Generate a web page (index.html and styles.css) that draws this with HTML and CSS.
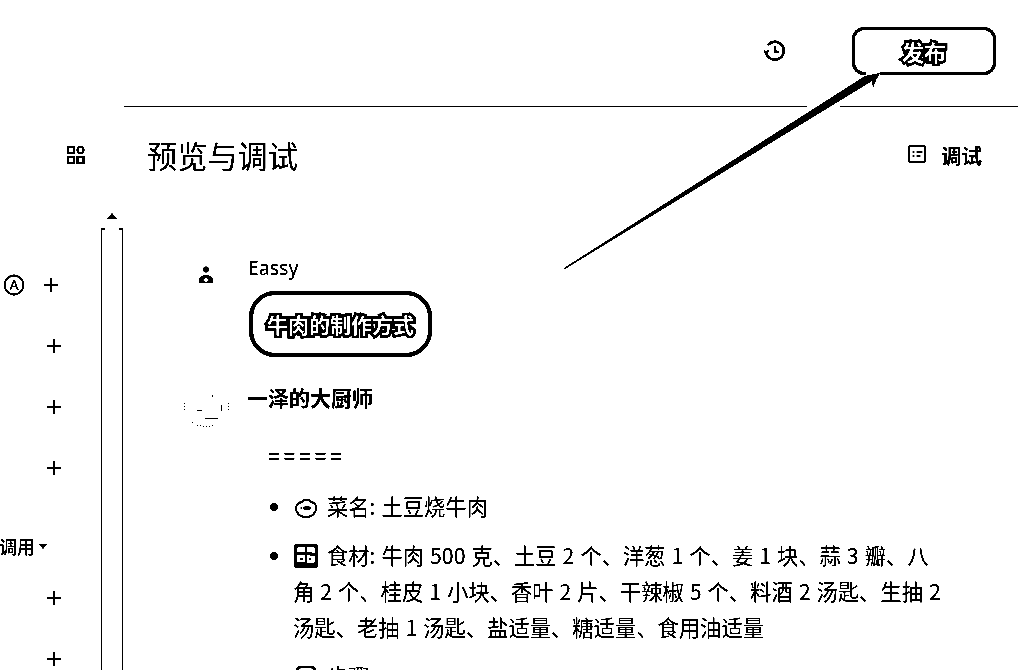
FILE: index.html
```html
<!DOCTYPE html>
<html lang="zh">
	<head>
		<meta charset="utf-8">
		<title>预览与调试</title>
		<link rel="stylesheet" href="styles.css">
	</head>
	<body>
		<div class="page">
			<header class="topbar">
				<div class="topbar-actions">
					<svg class="history" width="24" height="24" viewBox="0 0 24 24" fill="none" stroke="#000" stroke-width="2.400">
						<path d="M5 6A9 9 0 1 1 3 13"/>
						<path d="M1 11.500 3 14 5.500 11.500" stroke-width="1.800"/>
						<path d="M12 7v6h4" stroke-width="2.600"/>
					</svg>
					<button class="publish">发布</button>
				</div>
				<div class="topbar-rule">
					<span class="rule-long"></span>
					<span class="rule-short"></span>
				</div>
			</header>

			<div class="workspace">
				<aside class="sidebar">
					<div class="rail">
						<svg class="grid-icon" width="18" height="18" viewBox="0 0 18 18" fill="none" stroke="#000" stroke-width="2">
							<rect x="1" y="1" width="6" height="6"/>
							<circle cx="13.500" cy="4" r="3"/>
							<rect x="1" y="11" width="6" height="6"/>
							<rect x="10.500" y="11" width="6" height="6"/>
						</svg>
						<div class="rail-row">
							<svg class="model-icon" width="22" height="22" viewBox="0 0 22 22">
								<circle cx="11" cy="11" r="9.500" fill="none" stroke="#000" stroke-width="1.800"/>
								<text x="11" y="16" text-anchor="middle" class="model-letter">A</text>
							</svg>
							<span class="plus"></span>
						</div>
						<div class="rail-row"><span class="plus"></span></div>
						<div class="rail-row"><span class="plus"></span></div>
						<div class="rail-row"><span class="plus"></span></div>
						<div class="rail-label">调用<span class="caret"></span></div>
						<div class="rail-row"><span class="plus"></span></div>
						<div class="rail-row"><span class="plus"></span></div>
					</div>
					<div class="scroller">
						<span class="scroll-up"></span>
						<div class="scroll-track"></div>
					</div>
				</aside>

				<main class="preview">
					<div class="preview-head">
						<h1 class="preview-title">预览与调试</h1>
						<div class="debug">
							<svg width="20" height="20" viewBox="0 0 20 20" fill="none" stroke="#000" stroke-width="2">
								<rect x="2" y="1" width="16" height="16" rx="1.500"/>
								<path d="M5.500 7h2M9.500 7h6M5.500 11h2M9.500 11h4" stroke-width="1.600"/>
							</svg>
							<span>调试</span>
						</div>
					</div>

					<section class="message user-message">
						<svg class="avatar" width="46" height="24" viewBox="0 0 46 24">
							<circle cx="23" cy="6.500" r="3"/>
							<path fill-rule="evenodd" d="M16 20v-2.500c0-3 3-5 5-5h4c2 0 5 2 5 5v2.500zM19.500 17l3.500 2 3.500-2-3.500-2z"/>
						</svg>
						<div class="message-body">
							<div class="sender">Eassy</div>
							<div class="bubble"><span class="outlined">牛肉的制作方式</span></div>
						</div>
					</section>

					<section class="message bot-message">
						<svg class="avatar chef" width="46" height="36" viewBox="0 0 46 36" fill="none" stroke="#000">
							<path d="M1.500 10v8M45.500 10v7M9 29l5 3 6 1.500h7l5-1.500" stroke-dasharray="1 2"/>
							<path d="M29.500 2v2M14 17.500h5M38.500 12v6M22 25.500h13"/>
						</svg>
						<div class="message-body">
							<div class="bot-name">一泽的大厨师</div>
							<p class="divider-text">=====</p>
							<ul class="reply-list">
								<li>
									<svg class="inline-icon" width="24" height="22" viewBox="0 0 24 22" fill="none" stroke="#000" stroke-width="1.800">
										<path d="M3 15c-3-5 1-10 5-10 2-3 7-3 9 0 4 0 7 5 4 10-2 4-5 5-9 5s-7-1-9-5z"/>
										<path d="M6.500 11h1.500" stroke-width="1.400"/>
										<ellipse cx="13" cy="11" rx="4.500" ry="1.800" fill="#000" stroke="none"/>
									</svg>
									菜名: 土豆烧牛肉
								</li>
								<li>
									<svg class="inline-icon" width="24" height="24" viewBox="0 0 24 24">
										<rect width="24" height="24" rx="3"/>
										<path fill="#fff" d="M4 3h7v5H3V4zM13 3h7l1 1v5l-8-1zM3 11h8v7H3zM13 11l8 1v6l-2 1h-6z"/>
										<path d="M6 14h3v2H6zM15 14h2v2h-2z"/>
									</svg>
									食材: 牛肉 500 克、土豆 2 个、洋葱 1 个、姜 1 块、蒜 3 瓣、八角 2 个、桂皮 1 小块、香叶 2 片、干辣椒 5 个、料酒 2 汤匙、生抽 2 汤匙、老抽 1 汤匙、盐适量、糖适量、食用油适量
								</li>
								<li>
									<svg class="inline-icon" width="24" height="24" viewBox="0 0 24 24" fill="none" stroke="#000" stroke-width="2.500">
										<rect x="3" y="2" width="18" height="20" rx="4"/>
									</svg>
									步骤:
								</li>
							</ul>
						</div>
					</section>
				</main>
			</div>

			<svg class="arrow" width="1018" height="300" viewBox="0 0 1018 300">
				<path fill="#fff" d="M866 68h14v9h-14z"/>
				<path d="M564 268 865 76 880 73 876 80 873 88 872 81 565 269z"/>
			</svg>
		</div>
	</body>
</html>
```

FILE: styles.css
```css
html,body{
	margin:0;
	background:#fff;
}
.page{
	position:relative;
	width:1018px;
	height:670px;
	overflow:hidden;
	background:#fff;
	color:#000;
	font-family:"Noto Sans CJK SC","Noto Sans",sans-serif;
	filter:grayscale(1) brightness(.82) contrast(12);
}

/* top bar */
.topbar{
	margin-left:124px;
	height:107px;
	display:flex;
	flex-direction:column;
}
.topbar-actions{
	flex:1;
	display:flex;
	align-items:flex-start;
	justify-content:flex-end;
	padding:27px 22px 0 0;
}
.history{
	margin:12px 65px 0 0;
}
.publish{
	width:144px;
	height:48px;
	padding:0;
	background:#fff;
	border:3px solid #000;
	border-radius:12px;
	font-family:inherit;
	font-size:22px;
	font-weight:700;
	line-height:1;
	color:#fff;
	-webkit-text-stroke:5px #000;
	paint-order:stroke fill;
}
.topbar-rule{
	display:flex;
	gap:33px;
}
.rule-long,.rule-short{
	height:1px;
	background:#000;
}
.rule-long{
	flex:1;
}
.rule-short{
	width:178px;
}

.workspace{
	display:flex;
	height:563px;
}

/* left rail */
.sidebar{
	width:124px;
	flex:none;
	display:flex;
}
.rail{
	width:101px;
	flex:none;
}
.grid-icon{
	display:block;
	margin:39px 0 90px 67px;
}
.rail-row{
	height:61px;
	display:flex;
	align-items:center;
	padding-left:47px;
	box-sizing:border-box;
}
.model-icon{
	margin-left:-44px;
	margin-right:19px;
}
.model-letter{
	font-family:"Noto Sans",sans-serif;
	font-size:14px;
	font-weight:500;
}
.plus{
	width:14px;
	height:14px;
	background:
		linear-gradient(#000,#000) center/14px 2px no-repeat,
		linear-gradient(#000,#000) center/2px 14px no-repeat;
}
.rail-label{
	height:69px;
	box-sizing:border-box;
	padding-bottom:9px;
	margin-left:-1px;
	font-size:18px;
	line-height:24px;
	font-weight:500;
	display:flex;
	align-items:flex-end;
	gap:4px;
}
.caret{
	width:0;
	height:0;
	margin-bottom:9px;
	border:4.500px solid transparent;
	border-top:5px solid #000;
	border-bottom:0;
}
.scroller{
	width:22px;
	flex:none;
	display:flex;
	flex-direction:column;
	align-items:center;
	padding-top:106px;
}
.scroll-up{
	width:0;
	height:0;
	border:5px solid transparent;
	border-bottom:6px solid #000;
	border-top:0;
}
.scroll-track{
	width:20px;
	flex:1;
	margin-top:9px;
	border-left:1px solid #000;
	border-right:1px solid #000;
	position:relative;
}
.scroll-track::before,.scroll-track::after{
	content:"";
	position:absolute;
	top:0;
	width:3px;
	height:2px;
	background:#000;
}
.scroll-track::before{
	left:0;
}
.scroll-track::after{
	right:0;
}

/* preview pane */
.preview{
	flex:1;
	min-width:0;
}
.preview-head{
	display:flex;
	align-items:center;
	justify-content:space-between;
	padding:27px 36px 0 23px;
}
.preview-title{
	margin:0;
	font-size:30.200px;
	font-weight:400;
	line-height:42px;
}
.debug{
	display:flex;
	align-items:center;
	gap:14px;
	font-size:20.500px;
	font-weight:700;
}
.message{
	display:flex;
	padding-left:59px;
}
.user-message{
	margin-top:79px;
}
.bot-message{
	margin-top:25px;
}
.avatar{
	width:46px;
	flex:none;
	margin-right:20px;
}
.user-message .avatar{
	margin-top:8px;
}
.chef{
	margin-top:11px;
	shape-rendering:crispEdges;
}
.sender{
	margin-left:-1px;
	font-family:"Noto Sans",sans-serif;
	font-size:19.500px;
	line-height:26px;
}
.bubble{
	width:183px;
	height:66px;
	box-sizing:border-box;
	margin-top:10px;
	border:4px solid #000;
	border-radius:26px;
	display:flex;
	align-items:center;
	justify-content:center;
}
.outlined{
	font-size:21px;
	font-weight:700;
	color:#fff;
	-webkit-text-stroke:5px #000;
	paint-order:stroke fill;
}
.bot-name{
	margin-left:-2px;
	font-size:21px;
	font-weight:700;
	line-height:30px;
}
.divider-text{
	margin:25px 0 0 19px;
	font-size:21px;
	line-height:36px;
	letter-spacing:3.900px;
}
.reply-list{
	margin:15px 0 0;
	padding:0 0 0 44px;
	width:652px;
	font-size:21.300px;
	line-height:36px;
	word-spacing:1.200px;
}
.reply-list li{
	margin-bottom:13px;
}
.inline-icon{
	vertical-align:-4px;
	margin:0 3px 0 1px;
}
.arrow{
	position:absolute;
	left:0;
	top:0;
}
```
